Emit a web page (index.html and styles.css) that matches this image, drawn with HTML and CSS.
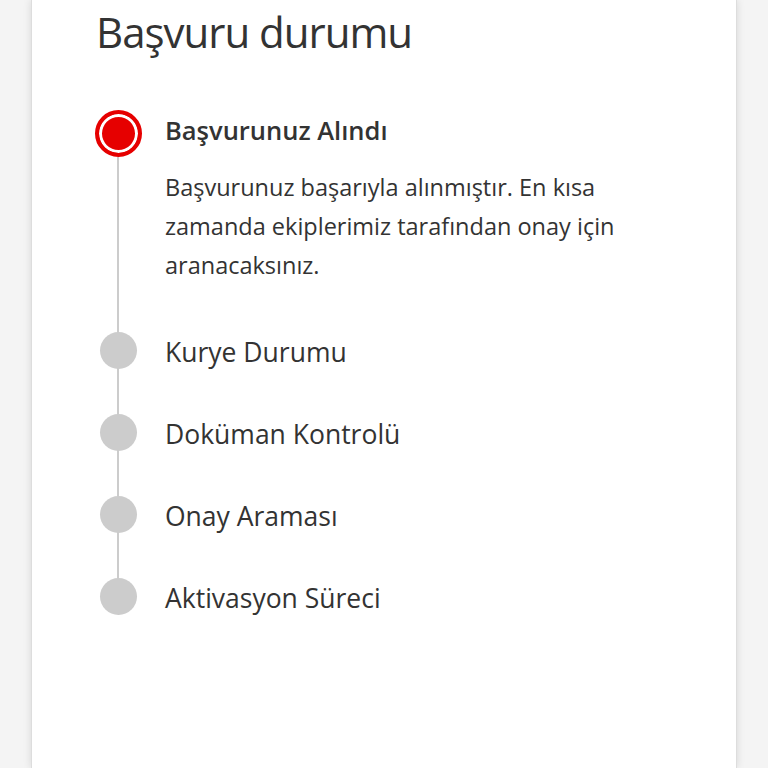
FILE: index.html
```html
<!DOCTYPE html>
<html>
<head>
    <title>Başvuru durumu</title>
    <meta charset="utf-8">
    <link rel="stylesheet" href="styles.css">
</head>
<body>
    <div class="card">
        <h1 class="title">Başvuru durumu</h1>
        <ul class="steps">
            <li class="step active">
                <span class="dot"></span>
                <div class="step-body">
                    <h3 class="step-title">Başvurunuz Alındı</h3>
                    <p class="step-text">Başvurunuz başarıyla alınmıştır. En kısa zamanda ekiplerimiz tarafından onay için aranacaksınız.</p>
                </div>
            </li>
            <li class="step">
                <span class="dot"></span>
                <span class="step-label">Kurye Durumu</span>
            </li>
            <li class="step">
                <span class="dot"></span>
                <span class="step-label">Doküman Kontrolü</span>
            </li>
            <li class="step">
                <span class="dot"></span>
                <span class="step-label">Onay Araması</span>
            </li>
            <li class="step">
                <span class="dot"></span>
                <span class="step-label">Aktivasyon Süreci</span>
            </li>
        </ul>
    </div>
</body>
</html>
```

FILE: styles.css
```css
body {
    margin: 0;
    background-color: #f4f4f4;
    font-family: "Open Sans", Lato, sans-serif;
    color: #333;
}
.card {
    margin: 0 31px;
    min-height: 768px;
    box-sizing: border-box;
    padding: 4px 0 0 63px;
    background-color: #fff;
    border-left: 1px solid #ddd;
    border-right: 1px solid #ddd;
    box-shadow: 0 0 8px rgba(0, 0, 0, 0.12);
}
.title {
    margin: 0 0 0 1px;
    font-size: 42px;
    line-height: 56px;
    font-weight: normal;
    letter-spacing: -1px;
}
.steps {
    position: relative;
    list-style: none;
    margin: 50px 0 0;
    padding: 0;
}
.steps::before {
    content: "";
    position: absolute;
    left: 22px;
    top: 47px;
    bottom: 18px;
    width: 2px;
    background-color: #ccc;
}
.step {
    display: flex;
    align-items: center;
    margin-bottom: 45px;
}
.step .dot {
    position: relative;
    z-index: 1;
    flex: none;
    width: 37px;
    height: 37px;
    margin: 0 5px;
    border-radius: 50%;
    background-color: #ccc;
}
.step.active {
    align-items: flex-start;
    margin-bottom: 47px;
}
.step.active .dot {
    width: 39px;
    height: 39px;
    margin: 0;
    background-color: #e60000;
    border: 4px solid #e60000;
    box-shadow: inset 0 0 0 3px #fff;
}
.step-body {
    margin: 4px 0 0 23px;
}
.step-title {
    margin: 0;
    font-size: 25.5px;
    line-height: 32px;
    font-weight: 600;
}
.step-text {
    width: 490px;
    margin: 22px 0 0;
    font-size: 23.5px;
    line-height: 39px;
}
.step-label {
    margin-left: 23px;
    padding-top: 4px;
    font-size: 26.5px;
    line-height: 33px;
}
```
